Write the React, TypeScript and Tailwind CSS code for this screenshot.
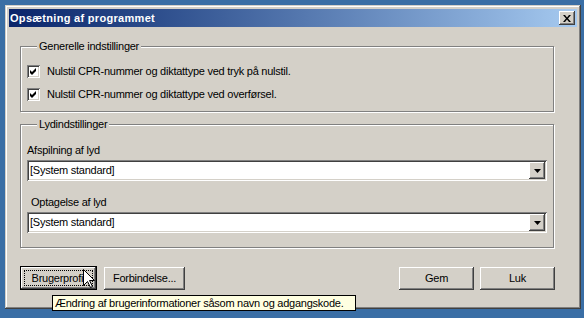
import React from "react";

const raised =
  "shadow-[inset_-1px_-1px_#404040,inset_1px_1px_#ffffff,inset_-2px_-2px_#808080,inset_2px_2px_#d4d0c8]";
const sunken =
  "shadow-[inset_1px_1px_#808080,inset_-1px_-1px_#ffffff,inset_2px_2px_#404040,inset_-2px_-2px_#d4d0c8]";

function Checkbox() {
  return (
    <div className={`w-[13px] h-[13px] bg-white shrink-0 relative ${sunken}`}>
      <svg width="7" height="7" viewBox="0 0 7 7" className="absolute left-[3px] top-[3px]">
        <polygon points="0,2 2,4 6,0 6,3 2,7 0,5" fill="#000" />
      </svg>
    </div>
  );
}

function Combo({ value }: { value: string }) {
  return (
    <div className={`h-[21px] bg-white flex items-center p-[2px] ${sunken}`}>
      <span className="flex-1 pl-[1px] leading-[13px]">{value}</span>
      <div className={`w-[16px] h-[17px] bg-[#d4d0c8] flex items-center justify-center ${raised}`}>
        <svg width="7" height="4" viewBox="0 0 7 4">
          <polygon points="0,0 7,0 3.5,4" fill="#000" />
        </svg>
      </div>
    </div>
  );
}

function Button({ label, w }: { label: string; w: string }) {
  return (
    <div className={`${w} h-[23px] bg-[#d4d0c8] flex items-center justify-center ${raised}`}>
      {label}
    </div>
  );
}

function GroupBox({ title, children, h }: { title: string; children: React.ReactNode; h: string }) {
  return (
    <fieldset
      className={`${h} border border-[#808080] shadow-[1px_1px_0_#ffffff,inset_1px_1px_0_#ffffff] px-[6px] m-0`}
    >
      <legend className="ml-[10px] px-[2px] leading-[13px] bg-[#d4d0c8]">{title}</legend>
      {children}
    </fieldset>
  );
}

export default function App() {
  return (
    <div className="relative w-[584px] h-[318px] overflow-hidden bg-[#3a6ea5] pl-[5px] pt-[5px] text-[11px] tracking-[-0.25px] text-black font-['Liberation_Sans',Arial,sans-serif]">
      {/* dialog window */}
      <div className="w-[576px] h-[304px] bg-[#d4d0c8] p-[4px] flex flex-col shadow-[inset_-1px_-1px_#404040,inset_1px_1px_#d4d0c8,inset_-2px_-2px_#808080,inset_2px_2px_#ffffff]">
        <div className="h-[18px] bg-gradient-to-r from-[#0a246a] to-[#a6caf0] flex items-center justify-between pl-[1px] pr-[2px]">
          <span className="text-white font-bold leading-[13px] tracking-[0.3px]">Opsætning af programmet</span>
          <div className={`w-[16px] h-[14px] bg-[#d4d0c8] flex items-center justify-center ${raised}`}>
            <svg width="8" height="7" viewBox="0 0 8 7">
              <path d="M0 0 L2 0 L4 2.5 L6 0 L8 0 L5 3.5 L8 7 L6 7 L4 4.5 L2 7 L0 7 L3 3.5 Z" fill="#000" />
            </svg>
          </div>
        </div>

        <div className="flex-1 flex flex-col pl-[11px] pr-[23px] pt-[13px]">
          <GroupBox title="Generelle indstillinger" h="h-[72px]">
            <div className="flex flex-col gap-[10px] mt-[12px]">
              <div className="flex items-center gap-[7px] leading-[13px]">
                <Checkbox />
                <span>Nulstil CPR-nummer og diktattype ved tryk på nulstil.</span>
              </div>
              <div className="flex items-center gap-[7px] leading-[13px]">
                <Checkbox />
                <span>Nulstil CPR-nummer og diktattype ved overførsel.</span>
              </div>
            </div>
          </GroupBox>

          <div className="mt-[6px]">
            <GroupBox title="Lydindstillinger" h="h-[130px]">
              <div className="mt-[13px] leading-[13px]">Afspilning af lyd</div>
              <div className="mt-[3px]">
                <Combo value="[System standard]" />
              </div>
              <div className="mt-[15px] pl-[4px] leading-[13px]">Optagelse af lyd</div>
              <div className="mt-[3px]">
                <Combo value="[System standard]" />
              </div>
            </GroupBox>
          </div>

          <div className="flex items-center mt-[18px]">
            <div className="relative w-[77px] h-[24px] border border-black bg-[#d4d0c8]">
              <div className={`w-full h-full flex items-center justify-center ${raised}`}>Brugerprofil</div>
              <span className="absolute inset-[3px] border border-dotted border-black" />
            </div>
            <div className="ml-[7px]">
              <Button label="Forbindelse..." w="w-[81px]" />
            </div>
            <div className="flex-1" />
            <Button label="Gem" w="w-[75px]" />
            <div className="ml-[6px] -mr-[1px]">
              <Button label="Luk" w="w-[75px]" />
            </div>
          </div>
        </div>
      </div>

      {/* tooltip */}
      <div className="absolute left-[52px] top-[295px] h-[16px] w-[304px] border border-black bg-[#ffffe1] px-[2px] leading-[14px] whitespace-nowrap">
        Ændring af brugerinformationer såsom navn og adgangskode.
      </div>

      {/* mouse cursor */}
      <svg width="13" height="20" viewBox="0 0 13 20" className="absolute left-[83px] top-[269px]">
        <path
          d="M0.5 0.5 L0.5 16.5 L4.5 12.5 L7.5 18.5 L9.5 17.5 L6.5 11.5 L11.5 11.5 Z"
          fill="#fff"
          stroke="#000"
          strokeWidth="1"
        />
      </svg>
    </div>
  );
}
